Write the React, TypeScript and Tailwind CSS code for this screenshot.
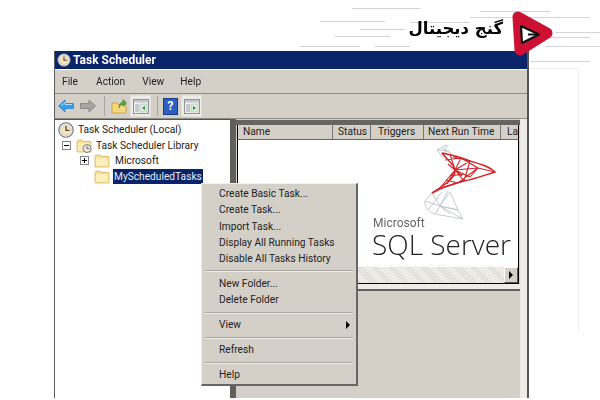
const uiFont = { fontFamily: 'Roboto, "Liberation Sans", sans-serif' };

function Clock({ size = 16 }: { size?: number }) {
  return (
    <svg width={size} height={size} viewBox="0 0 16 16" className="shrink-0">
      <circle cx="8" cy="8" r="7.200" fill="#eef0f2" stroke="#6d7278" strokeWidth="1.100" />
      <circle cx="8" cy="8" r="5.200" fill="#f6e7b4" stroke="#b8bcc0" strokeWidth="0.600" />
      <path d="M8 4v4.300h3.400" fill="none" stroke="#4a4a40" strokeWidth="1.300" />
    </svg>
  );
}

function Folder({ clock = false }: { clock?: boolean }) {
  return (
    <svg width="16" height="15" viewBox="0 0 16 15" className="shrink-0">
      <path d="M1 3.500 2 2h4.500l1 1.500H15v10.500H1z" fill="#f6dd94" stroke="#d9b868" strokeWidth="0.800" />
      <rect x="2" y="5" width="12" height="8" fill="#fbeebb" />
      {clock && (
        <>
          <circle cx="11" cy="10.500" r="4" fill="#e8e8e8" stroke="#666" strokeWidth="0.800" />
          <path d="M11 8.200v2.400h2" fill="none" stroke="#444" strokeWidth="0.800" />
        </>
      )}
    </svg>
  );
}

function ExpandBox({ plus }: { plus: boolean }) {
  return (
    <span className="relative w-[9px] h-[9px] border border-[#848484] bg-white shrink-0 flex items-center justify-center">
      <span className="w-[5px] h-px bg-black" />
      {plus && <span className="absolute w-px h-[5px] bg-black" />}
    </span>
  );
}

function PanelIcon({ mirrored }: { mirrored: boolean }) {
  return (
    <span className="w-[21px] h-[22px] bg-[#ecebe6] border border-[#e2e0da] flex items-center justify-center shrink-0">
      <svg width="16" height="15" viewBox="0 0 16 15">
        <rect x="0.500" y="0.500" width="15" height="14" fill="#f3f3f0" stroke="#8f9499" />
        <rect x="1" y="1" width="14" height="2.500" fill="#c3c8cc" />
        <path d="M3 5v8M5 5v8" stroke="#8fa0a8" strokeWidth="1" />
        <rect x="7" y="5" width="7" height="8" fill="#dfe9df" stroke="#aab5aa" strokeWidth="0.500" />
        <path d={mirrored ? "M9 7l3 2-3 2z" : "M12 7l-3 2 3 2z"} fill="#1f9a3c" />
      </svg>
    </span>
  );
}

function Toolbar() {
  return (
    <div className="h-[25px] flex items-center bg-[#d4d0c8] border-b border-[#8e8c86] pl-[3px] shrink-0">
      <svg width="16" height="14" viewBox="0 0 16 14" className="shrink-0">
        <path d="M0.500 7 7 1v3.500h8.500v5H7V13z" fill="#35a0ea" stroke="#1c78c0" strokeWidth="0.700" />
        <path d="M3 7 7 3.500v2h7" fill="none" stroke="#a8defa" strokeWidth="1" />
      </svg>
      <svg width="16" height="14" viewBox="0 0 16 14" className="shrink-0 ml-[6px]">
        <path d="M15.500 7 9 1v3.500H0.500v5H9V13z" fill="#a6a4a0" stroke="#777672" strokeWidth="0.700" />
      </svg>
      <span className="w-px h-[20px] bg-[#a8a6a0] ml-[8px]" />
      <svg width="16" height="16" viewBox="0 0 16 16" className="shrink-0 ml-[6px]">
        <path d="M1 5h5l1 1.500h8V15H1z" fill="#f5d97c" stroke="#c09a3c" strokeWidth="0.800" />
        <path d="M8 10c0-4 2-6 4-6V1.500L15.500 5 12 8.500V6.500c-2 0-3 1-4 3.500z" fill="#54a83a" stroke="#2f7a22" strokeWidth="0.500" />
      </svg>
      <span className="ml-[3px]"><PanelIcon mirrored={false} /></span>
      <span className="w-px h-[20px] bg-[#a8a6a0] ml-[6px]" />
      <span className="ml-[5px] w-[15px] h-[17px] bg-[#2d5fc0] border border-[#1a3a86] text-white text-[12px] font-bold leading-[15px] text-center shrink-0" style={uiFont}>?</span>
      <span className="ml-[3px]"><PanelIcon mirrored /></span>
    </div>
  );
}

function TreeRow({ indent, children }: { indent: string; children: React.ReactNode }) {
  return <div className={`h-[15.500px] flex items-center ${indent}`}>{children}</div>;
}

function Tree() {
  return (
    <div className="w-[175px] shrink-0 bg-white border-t border-[#55544f] pt-[2px] pl-[3px] text-[10.200px] text-[#222] whitespace-nowrap" style={uiFont}>
      <TreeRow indent="pl-0">
        <Clock />
        <span className="ml-[4px]">Task Scheduler (Local)</span>
      </TreeRow>
      <TreeRow indent="pl-[4px]">
        <ExpandBox plus={false} />
        <span className="ml-[5px]"><Folder clock /></span>
        <span className="ml-[4px]">Task Scheduler Library</span>
      </TreeRow>
      <TreeRow indent="pl-[22px]">
        <ExpandBox plus />
        <span className="ml-[5px]"><Folder /></span>
        <span className="ml-[5px]">Microsoft</span>
      </TreeRow>
      <TreeRow indent="pl-[36px]">
        <Folder />
        <span className="ml-[3px] px-[1px] bg-[#0a246a] text-[#e8ecf4] h-[15px] leading-[15px]">MyScheduledTasks</span>
      </TreeRow>
    </div>
  );
}

function SqlMesh() {
  return (
    <svg width="80" height="80" viewBox="0 0 80 80" className="block">
      <g fill="none" stroke="#c0c4ca" strokeWidth="0.900">
        <path d="M17 6 27 1M17 6l6 8M17 6l12 1M27 1l-3 10M22 4l10 6" />
        <path d="M12 49 5 57c-1 6 3 10 10 13l28 5-5-9-8-18" />
        <path d="M12 49 20 62 43 75M5 57l15 5 18 4M8 66l14-18M20 62l8-15M15 70l5-8 10 8M30 48l-10 14 18 4" />
      </g>
      <g fill="none" stroke="#d0262b" strokeWidth="1.100">
        <path d="M22 9c10 2 18 4 28 8 10 3 19 5 25 11-10 3-20 7-31 9-12 3-22 6-32 12" strokeWidth="1.500" />
        <path d="M22 9c5 7 12 11 13 17 1 8-11 15-23 23" strokeWidth="1.500" />
        <path d="M30 10 35 26 41 14M50 17 35 26 58 24 75 28M41 14 58 24 50 33M35 26 44 37M35 26 27 40M35 26 50 33M35 26 20 44M25 16 41 14M28 20 35 26 42 32M58 24 38 39M50 17 44 37M22 44l22-7M33 13l17 4M30 32l14-2M26 36l12 3" />
      </g>
    </svg>
  );
}

function ListPanel() {
  const cols = [
    ["w-[95px]", "pl-[5px]", "Name"],
    ["w-[38px]", "pl-[5px]", "Status"],
    ["w-[53px]", "pl-[7px]", "Triggers"],
    ["w-[77px]", "pl-[4px]", "Next Run Time"],
    ["w-[18px]", "pl-[6px]", "La"],
  ];
  return (
    <div className="h-[159px] mx-[1px] border border-black border-t-0 flex flex-col bg-white overflow-hidden shrink-0">
      <div className="h-[15px] flex shrink-0 bg-[#d4d0c8] border-b border-[#666] text-[10.200px] text-[#222] whitespace-nowrap" style={uiFont}>
        {cols.map(([w, p, t]) => (
          <div key={t} className={`${w} ${p} shrink-0 border-r border-[#777] leading-[14px] overflow-hidden`}>{t}</div>
        ))}
      </div>
      <div className="flex-1 flex flex-col items-end pr-[6px] pt-[4px] min-h-0">
        <div className="mr-[12px]"><SqlMesh /></div>
      </div>
      <div className="h-[16px] shrink-0 flex justify-end bg-[repeating-linear-gradient(45deg,#dddbd5_0_1px,#f4f3f0_1px_2px)]">
        <div className="w-[14px] bg-[#d4d0c8] border-r border-b border-[#555] border-l border-l-white border-t border-t-white flex items-center justify-center">
          <span className="w-0 h-0 border-y-[4px] border-y-transparent border-l-[4px] border-l-black" />
        </div>
      </div>
    </div>
  );
}

function RightPane() {
  return (
    <div className="flex-1 flex min-w-0 bg-[#d4d0c8]">
      <div className="w-[6px] shrink-0 bg-[#5f5f5c]" />
      <div className="flex-1 flex flex-col min-w-0">
        <div className="h-[5px] bg-[#646462] shrink-0 mt-[1px]" />
        <ListPanel />
        <div className="h-[5px] bg-[#ecebe7] shrink-0" />
        <div className="h-[2px] bg-[#5f5f5c] shrink-0" />
        <div className="flex-1 bg-[#d4d0c8]" />
      </div>
      <div className="w-[7px] shrink-0 bg-[#ecebe7]" />
    </div>
  );
}

function Sep() {
  return <div className="h-[2px] mx-[3px] my-[3.350px] bg-[#a8a6a1] border-b border-[#eeeeea]" />;
}

function MenuItem({ label, arrow = false }: { label: string; arrow?: boolean }) {
  return (
    <div className="h-[16.300px] shrink-0 pl-[17px] pr-[6px] flex items-center justify-between text-[10.200px] text-[#222] whitespace-nowrap">
      <span>{label}</span>
      {arrow && <span className="w-0 h-0 border-y-[4px] border-y-transparent border-l-[4px] border-l-black" />}
    </div>
  );
}

function ContextMenu() {
  return (
    <div className="absolute left-[201px] top-[183px] w-[157px] h-[203px] bg-[#d4d0c8] border-t border-l border-[#f0efeb] border-r-2 border-b-2 border-r-[#666] border-b-[#666] pt-[1.500px]" style={uiFont}>
      <MenuItem label="Create Basic Task..." />
      <MenuItem label="Create Task..." />
      <MenuItem label="Import Task..." />
      <MenuItem label="Display All Running Tasks" />
      <MenuItem label="Disable All Tasks History" />
      <Sep />
      <MenuItem label="New Folder..." />
      <MenuItem label="Delete Folder" />
      <Sep />
      <MenuItem label="View" arrow />
      <Sep />
      <MenuItem label="Refresh" />
      <Sep />
      <MenuItem label="Help" />
    </div>
  );
}

function Logo() {
  const streaks: [number, number, number][] = [
    [352, 8, 68], [480, 11, 70], [470, 17, 120], [320, 21, 65], [410, 22, 60], [360, 29, 45], [555, 32, 45],
    [335, 36, 55], [550, 37, 40], [300, 46, 60], [375, 46, 35], [545, 46, 55], [530, 61, 60],
  ];
  return (
    <div className="absolute inset-x-0 top-0 h-[66px] pointer-events-none">
      <svg width="600" height="66" viewBox="0 0 600 66" className="absolute inset-0">
        {streaks.map(([x, y, w]) => (
          <rect key={`${x}-${y}`} x={x} y={y} width={w} height="1" fill="#d4d4d4" />
        ))}
        <path d="M518 17 547 33 520 50z" fill="#cc1133" stroke="#cc1133" strokeWidth="11" strokeLinejoin="round" />
        <path d="M521 26 539 34.500 522 43z" fill="#fff" stroke="#111" strokeWidth="2.200" strokeLinejoin="round" />
        <path d="M539 34.500h-11" stroke="#111" strokeWidth="2" fill="none" />
      </svg>
      <span dir="rtl" className="absolute left-[408px] top-[15px] w-[95px] text-[16.500px] leading-[28px] font-bold text-black whitespace-nowrap" style={{ fontFamily: '"DejaVu Sans", sans-serif' }}>گنج دیجیتال</span>
    </div>
  );
}

export default function App() {
  return (
    <div className="relative w-[600px] h-[400px] overflow-hidden bg-white pt-[51px] pl-[54px]">
      <div className="absolute left-[529px] top-[68px] w-[50px] h-[265px] border-t border-r border-[#f1f1f1]" />
      <div className="w-[475px] h-[347px] flex flex-col border-l border-[#5e5e5e] border-r-[2px] border-r-[#555] blur-[0.3px]">
        <div className="h-[18px] shrink-0 bg-[#0a246a] flex items-center pl-[2px] text-white text-[12px] font-bold" style={uiFont}>
          <Clock size={14} />
          <span className="ml-[2px]">Task Scheduler</span>
        </div>
        <div className="h-[24px] shrink-0 mt-[1px] bg-[#d4d0c8] border-b border-[#8e8c86] flex items-center text-[10.200px] text-[#222]" style={uiFont}>
          <span className="ml-[7px]">File</span>
          <span className="ml-[18px]">Action</span>
          <span className="ml-[17px]">View</span>
          <span className="ml-[16px]">Help</span>
        </div>
        <Toolbar />
        <div className="flex-1 flex min-h-0 overflow-hidden">
          <Tree />
          <RightPane />
        </div>
      </div>
      <div className="absolute left-[373px] top-[217px] text-[12px] leading-[12px] text-[#666] blur-[0.3px]" style={uiFont}>Microsoft</div>
      <div className="absolute left-[372px] top-[229px] text-[28px] leading-[30px] font-light text-[#222] whitespace-nowrap blur-[0.3px]" style={{ fontFamily: '"Open Sans", sans-serif' }}>SQL Server</div>
      <ContextMenu />
      <Logo />
    </div>
  );
}
